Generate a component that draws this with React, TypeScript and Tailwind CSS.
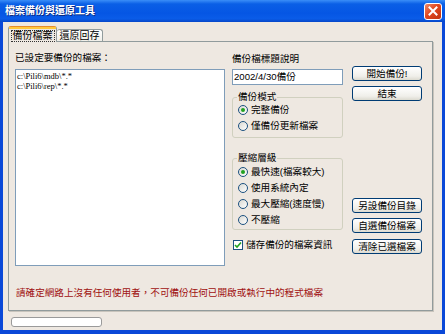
function Radio({ checked, label }: { checked?: boolean; label: string }) {
  return (
    <div className="h-[16px] flex items-center pl-[5px]">
      <span className="w-[10px] h-[10px] rounded-full border border-[#1c5180] bg-[linear-gradient(135deg,#d8d8d2,#ffffff)] flex items-center justify-center">
        {checked && <span className="w-[4px] h-[4px] rounded-full bg-[#21a121]" />}
      </span>
      <span className="ml-[3px] text-[9.6px] leading-[12px]">{label}</span>
    </div>
  );
}

function XpButton({ label, className = '' }: { label: string; className?: string }) {
  return (
    <button className={`w-[70px] h-[15px] rounded-[3px] border border-[#003c74] bg-[linear-gradient(to_bottom,#ffffff,#f0efea_70%,#dcdad0)] text-[9.6px] leading-[12px] flex items-center justify-center ${className}`}>
      {label}
    </button>
  );
}

export default function App() {
  return (
    <div className="w-[445px] h-[334px] bg-[#0a48d8] flex flex-col font-['Liberation_Sans','Noto_Sans_CJK_TC',sans-serif] text-black select-none">
      {/* title bar */}
      <div className="h-[22px] flex items-center justify-between pl-[5px] pr-[3px] bg-[linear-gradient(to_bottom,#3a8ef8_0%,#0a5fe6_18%,#0556e4_60%,#0a5ce8_85%,#0646c8_100%)]">
        <span className="text-white text-[10px] font-bold leading-[12px] [text-shadow:1px_1px_0_#0a2a80]">檔案備份與還原工具</span>
        <div className="w-[18px] h-[17px] rounded-[3px] border border-white bg-[linear-gradient(135deg,#f08a6a,#e0471f_45%,#c13510)] flex items-center justify-center">
          <svg width="10" height="10" viewBox="0 0 10 10">
            <path d="M1.5 1.5 L8.5 8.5 M8.5 1.5 L1.5 8.5" stroke="white" strokeWidth="2" strokeLinecap="square" />
          </svg>
        </div>
      </div>

      {/* client area */}
      <div className="flex-1 ml-[3px] mr-[3px] mb-[4px] bg-[#eee8e1] flex flex-col">
        {/* tabs */}
        <div className="h-[20px] -mb-px ml-[5px] flex items-end relative z-10">
          <div className="w-[49px] h-[16px] rounded-t-[3px] border border-b-0 border-[#919b9c] border-t-[#e68b2c] bg-[#eee8e1] flex flex-col">
            <div className="h-[2px] bg-[#ffc83c]" />
            <div className="flex-1 flex items-center justify-center">
              <span className="border border-dotted border-[#333] px-[1px] text-[10px] leading-[10px]">備份檔案</span>
            </div>
          </div>
          <div className="w-[46px] h-[12px] mb-px rounded-t-[3px] border border-b-0 border-l-0 border-[#919b9c] bg-[linear-gradient(to_bottom,#ffffff,#f0efe9)] flex items-center justify-center">
            <span className="text-[10px] leading-[10px]">還原回存</span>
          </div>
        </div>

        {/* panel */}
        <div className="w-[425px] h-[270px] ml-[5px] border border-[#919b9c] shadow-[1px_1px_0_#c8c4bc] flex flex-col pl-[6px]">
          <div className="flex">
            {/* left column */}
            <div className="w-[210px] flex flex-col">
              <div className="mt-[10px] h-[12px] text-[9.6px] leading-[12px]">已設定要備份的檔案：</div>
              <div className="mt-[5px] h-[197px] bg-white border border-[#7f9db9] pl-[1px] pt-[1px] font-['Liberation_Serif',serif] text-[8.5px] leading-[10px]">
                <div>c:\Pili6\mdb\*.*</div>
                <div>c:\Pili6\rep\*.*</div>
              </div>
            </div>

            {/* middle column */}
            <div className="w-[111px] ml-[7px] flex flex-col">
              <div className="mt-[11px] h-[12px] text-[9.6px] leading-[12px]">備份檔標題說明</div>
              <div className="mt-[4px] h-[16px] bg-white border border-[#7f9db9] flex items-center pl-[1px] text-[9.6px] leading-[12px]">
                2002/4/30備份
              </div>
              <fieldset className="mt-[7px] border border-[#d0d0bf] rounded-[3px] pb-[3px]">
                <legend className="ml-[4px] px-[1px] text-[9.6px] leading-[10px]">備份模式</legend>
                <Radio checked label="完整備份" />
                <Radio label="僅備份更新檔案" />
              </fieldset>
              <fieldset className="mt-[15px] border border-[#d0d0bf] rounded-[3px] pb-[1px]">
                <legend className="ml-[4px] px-[1px] text-[9.6px] leading-[10px]">壓縮層級</legend>
                <div className="mt-px">
                  <Radio checked label="最快速(檔案較大)" />
                  <Radio label="使用系統內定" />
                  <Radio label="最大壓縮(速度慢)" />
                  <Radio label="不壓縮" />
                </div>
              </fieldset>
              <div className="mt-[8px] h-[14px] flex items-center pl-[1px]">
                <span className="w-[10px] h-[10px] border border-[#1c5180] bg-white flex items-center justify-center">
                  <svg width="8" height="8" viewBox="0 0 8 8">
                    <path d="M1 4 L3 6 L7 1.5" stroke="#21a121" strokeWidth="1.6" fill="none" />
                  </svg>
                </span>
                <span className="ml-[3px] text-[9.6px] leading-[12px]">儲存備份的檔案資訊</span>
              </div>
            </div>

            {/* right column */}
            <div className="w-[70px] ml-[9px] flex flex-col">
              <XpButton label="開始備份!" className="mt-[24px]" />
              <XpButton label="結束" className="mt-[5px]" />
              <XpButton label="另設備份目錄" className="mt-[97px]" />
              <XpButton label="自選備份檔案" className="mt-[5px]" />
              <XpButton label="清除已選檔案" className="mt-[6px]" />
            </div>
          </div>

          <div className="mt-[21px] ml-px h-[12px] text-[9.6px] leading-[12px] text-[#a01010]">
            請確定網路上沒有任何使用者，不可備份任何已開啟或執行中的程式檔案
          </div>
        </div>

        {/* progress bar */}
        <div className="mt-[6px] ml-[8px] w-[91px] h-[10px] rounded-[3px] border border-[#9a9a9a] bg-white" />
      </div>
    </div>
  );
}
